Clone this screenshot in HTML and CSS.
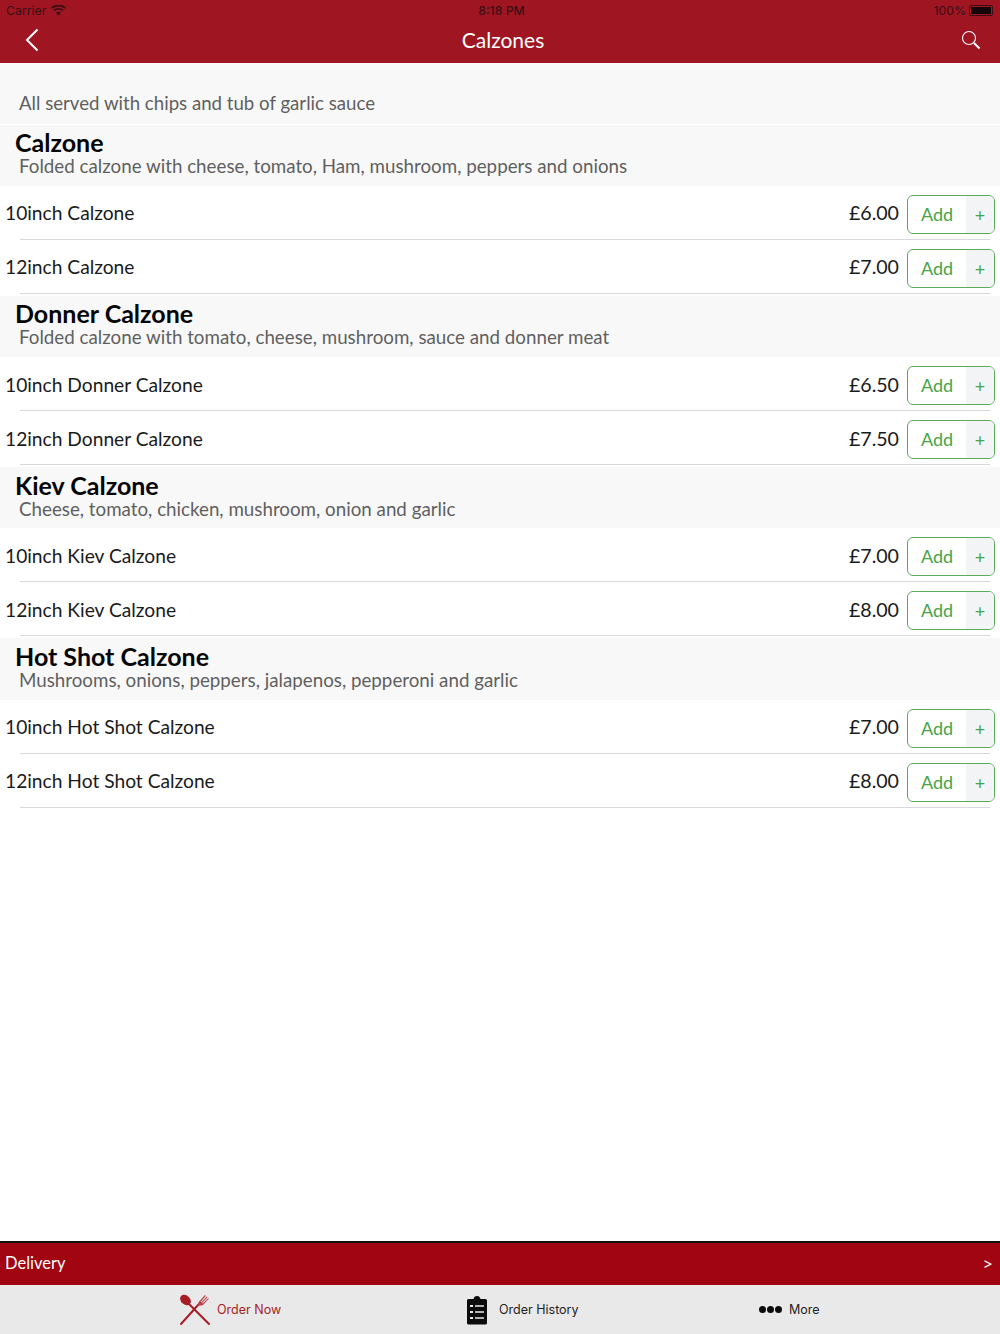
FILE: index.html
```html
<!DOCTYPE html>
<html lang="en">
<head>
<meta charset="utf-8">
<title>Calzones</title>
<link rel="stylesheet" href="styles.css">
</head>
<body>
<div class="app">
  <header class="top">
    <div class="status">
      <div class="status-left">Carrier
        <svg class="wifi" viewBox="0 0 16 12" width="15" height="11"><path d="M8 11.500 5.400 8.400a4 4 0 0 1 5.200 0zM3.900 6.800l-1.300-1.500a8.300 8.300 0 0 1 10.800 0l-1.300 1.500a6.300 6.300 0 0 0-8.200 0zM1.400 4 0 2.500a12 12 0 0 1 16 0L14.600 4a10 10 0 0 0-13.200 0z" fill="#3a0f14"/></svg>
      </div>
      <div class="status-time">8:18 PM</div>
      <div class="status-right">100%
        <span class="battery"><span class="battery-fill"></span></span>
      </div>
    </div>
    <div class="nav">
      <svg class="back" viewBox="0 0 14 24" width="14" height="24"><path d="M12.500 1.500 2 12l10.500 10.500" fill="none" stroke="#fff" stroke-width="2"/></svg>
      <div class="title">Calzones</div>
      <svg class="search" viewBox="0 0 20 20" width="20" height="20"><circle cx="8" cy="8" r="6.500" fill="none" stroke="#fff" stroke-width="1.100"/><path d="M13 13l5.500 5.500" stroke="#fff" stroke-width="2" fill="none"/></svg>
    </div>
  </header>

  <main class="content">
    <div class="intro">All served with chips and tub of garlic sauce</div>

    <section class="group">
      <div class="group-head"><h2>Calzone</h2><p>Folded calzone with cheese, tomato, Ham, mushroom, peppers and onions</p></div>
      <div class="row"><span class="name">10inch Calzone</span><span class="price">£6.00</span><div class="add"><span class="add-label">Add</span><span class="add-plus">+</span></div></div>
      <div class="row"><span class="name">12inch Calzone</span><span class="price">£7.00</span><div class="add"><span class="add-label">Add</span><span class="add-plus">+</span></div></div>
    </section>

    <section class="group">
      <div class="group-head"><h2>Donner Calzone</h2><p>Folded calzone with tomato, cheese, mushroom, sauce and donner meat</p></div>
      <div class="row"><span class="name">10inch Donner Calzone</span><span class="price">£6.50</span><div class="add"><span class="add-label">Add</span><span class="add-plus">+</span></div></div>
      <div class="row"><span class="name">12inch Donner Calzone</span><span class="price">£7.50</span><div class="add"><span class="add-label">Add</span><span class="add-plus">+</span></div></div>
    </section>

    <section class="group">
      <div class="group-head"><h2>Kiev Calzone</h2><p>Cheese, tomato, chicken, mushroom, onion and garlic</p></div>
      <div class="row"><span class="name">10inch Kiev Calzone</span><span class="price">£7.00</span><div class="add"><span class="add-label">Add</span><span class="add-plus">+</span></div></div>
      <div class="row"><span class="name">12inch Kiev Calzone</span><span class="price">£8.00</span><div class="add"><span class="add-label">Add</span><span class="add-plus">+</span></div></div>
    </section>

    <section class="group">
      <div class="group-head"><h2>Hot Shot Calzone</h2><p>Mushrooms, onions, peppers, jalapenos, pepperoni and garlic</p></div>
      <div class="row"><span class="name">10inch Hot Shot Calzone</span><span class="price">£7.00</span><div class="add"><span class="add-label">Add</span><span class="add-plus">+</span></div></div>
      <div class="row"><span class="name">12inch Hot Shot Calzone</span><span class="price">£8.00</span><div class="add"><span class="add-label">Add</span><span class="add-plus">+</span></div></div>
    </section>
  </main>

  <div class="delivery"><span>Delivery</span><span class="chev">&gt;</span></div>

  <nav class="tabs">
    <div class="tab tab-order">
      <svg class="ic-cutlery" viewBox="0 0 32 32" width="32" height="32">
        <path d="M2 30 19.500 10.500" stroke="#a81c26" stroke-width="2" stroke-linecap="round" fill="none"/>
        <path d="M30 30 9 9" stroke="#a81c26" stroke-width="2" stroke-linecap="round" fill="none"/>
        <ellipse cx="6.500" cy="6" rx="6" ry="4.500" transform="rotate(42 6.500 6)" fill="#a81c26"/>
        <path d="M18 12l2-4.500 6-6.500 .8 .7-5 6 .7 .6 5.200-5.800 .7 .7-5.200 5.800 .7 .6 5.300-5.600 .6 .7-6 6.500z" fill="#b8434c"/>
      </svg>
      <span>Order Now</span>
    </div>
    <div class="tab tab-history">
      <svg class="ic-clip" viewBox="0 0 20 30" width="20" height="30">
        <path d="M1.500 4H6.500C7 2 8 1 10 1s3 1 3.500 3h5A1.500 1.500 0 0 1 20 5.500V28a1.500 1.500 0 0 1-1.500 1.500h-17A1.500 1.500 0 0 1 0 28V5.500A1.500 1.500 0 0 1 1.500 4z" fill="#0c0c0c"/>
        <path d="M3 10h3v2H3zM8 10.300h9v1.400H8zM3 16h3v2H3zM8 16.300h9v1.400H8zM3 22h3v2H3zM8 22.300h9v1.400H8z" fill="#e9e9e9"/>
      </svg>
      <span>Order History</span>
    </div>
    <div class="tab tab-more">
      <span class="dots"><i></i><i></i><i></i></span>
      <span>More</span>
    </div>
  </nav>
</div>
</body>
</html>
```

FILE: styles.css
```css
* { box-sizing: border-box; }
html, body { margin: 0; padding: 0; }
body { font-family: Lato, "Open Sans", sans-serif; background: #fff; }
.app { width: 1000px; height: 1334px; display: flex; flex-direction: column; overflow: hidden; }

.top { height: 63px; background: #9f1622; flex: none; }
.status { height: 20px; display: flex; justify-content: space-between; align-items: center; padding: 1px 7px 0 6px; font: 12.300px/19px Inter, sans-serif; color: #3a0f14; position: relative; }
.status-left, .status-right { display: flex; align-items: center; gap: 5px; }
.status-time { position: absolute; left: 0; right: 0; text-align: center; font-weight: 500; padding-left: 3px; }
.status-right { gap: 3px; }
.battery { width: 24px; height: 11px; border: 1px solid #3a0f14; border-radius: 2px; padding: 1px; display: block; }
.battery-fill { display: block; height: 100%; background: #14060a; }
.nav { height: 43px; display: flex; align-items: center; justify-content: space-between; padding: 0 19px 4px 25px; position: relative; }
.title { position: absolute; left: 0; right: 0; top: 7px; text-align: center; color: #fff; font-size: 21px; line-height: 26px; padding-left: 6px; }

.content { flex: 1; background: #fff; }
.intro { height: 60.500px; padding: 28px 0 0 19px; background: #f8f8f8; color: #5f5f5f; font-size: 18.650px; line-height: 24px; }
.group { display: block; }
.group-head { margin-top: 1px; height: 61.340px; background: #f8f8f8; padding: 4.500px 0 0 15px; }
.group + .group .group-head { margin-top: 2px; }
.group-head h2 { margin: 0; font-size: 25px; line-height: 26px; font-weight: 700; color: #050505; }
.group-head p { margin: 0 0 0 4px; font-size: 18.750px; line-height: 21px; color: #5f5f5f; }
.row { height: 54px; display: flex; align-items: center; padding: 0 5px; position: relative; }
.row::after { content: ""; position: absolute; left: 20px; right: 10px; bottom: 0; height: 1px; background: #d9d9d9; }
.name { flex: 1; font-size: 19.200px; color: #1a1a1a; }
.price { font-size: 19.600px; color: #1a1a1a; margin-right: 8px; }
.add { width: 88px; height: 39px; margin-top: 3px; border: 1px solid #5cab5c; border-radius: 6px; display: flex; overflow: hidden; color: #47a547; }
.add-label { width: 58px; text-align: center; font-size: 18px; line-height: 37px; }
.add-plus { flex: 1; background: #f3f4f5; text-align: center; font-size: 18px; line-height: 38px; }

.delivery { flex: none; height: 44px; border-top: 2px solid #111; background: #a00511; color: #fff; display: flex; justify-content: space-between; align-items: center; padding: 0 7px 2px 5px; font-size: 16.500px; }
.chev { font-size: 18px; }
.tabs { flex: none; height: 49px; background: #e9e9e9; display: block; position: relative; font: 12.500px/20px Inter, sans-serif; color: #1f1f1f; }
.tab { position: absolute; top: 0; height: 49px; display: flex; align-items: center; }
.tab-order { left: 179px; gap: 6px; color: #a81c26; }
.tab-history { left: 467px; gap: 12px; }
.tab-more { left: 759px; gap: 7px; }
.dots { display: flex; gap: 1px; }
.dots i { width: 7px; height: 7px; border-radius: 50%; background: #0c0c0c; display: block; }
```
